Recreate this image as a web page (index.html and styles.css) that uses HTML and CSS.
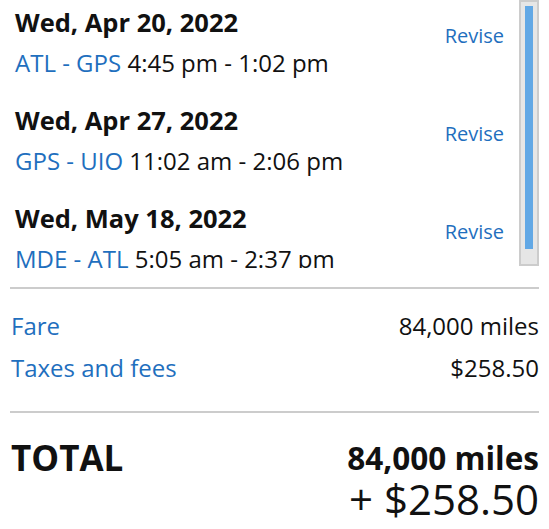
FILE: index.html
```html
<!doctype html>
<html>
<head>
<meta charset="utf-8">
<title>Trip summary</title>
<link rel="stylesheet" href="styles.css">
</head>
<body>
<div class="legsBox">
    <div class="legs">
        <div class="leg">
            <div class="legInfo">
                <div class="legDate">Wed, Apr 20, 2022</div>
                <div class="legRoute"><span class="airports">ATL - GPS</span> 4:45 pm - 1:02 pm</div>
            </div>
            <a class="revise" href="#">Revise</a>
        </div>
        <div class="leg">
            <div class="legInfo">
                <div class="legDate">Wed, Apr 27, 2022</div>
                <div class="legRoute"><span class="airports">GPS - UIO</span> 11:02 am - 2:06 pm</div>
            </div>
            <a class="revise" href="#">Revise</a>
        </div>
        <div class="leg">
            <div class="legInfo">
                <div class="legDate">Wed, May 18, 2022</div>
                <div class="legRoute"><span class="airports">MDE - ATL</span> 5:05 am - 2:37 pm</div>
            </div>
            <a class="revise" href="#">Revise</a>
        </div>
    </div>
    <div class="scrollTrack"><span class="scrollThumb"></span></div>
</div>
<ul class="price">
    <li class="priceRow">
        <span class="priceLabel">Fare</span>
        <span class="priceValue">84,000 miles</span>
    </li>
    <li class="priceRow">
        <span class="priceLabel">Taxes and fees</span>
        <span class="priceValue">$258.50</span>
    </li>
</ul>
<div class="total">
    <span class="totalLabel">TOTAL</span>
    <div class="totalValue">
        <span class="totalMiles">84,000 miles</span>
        <span class="totalCash">+ $258.50</span>
    </div>
</div>
</body>
</html>
```

FILE: styles.css
```css
html,
body {
	margin: 0;
	background: #fff;
}
body {
	padding: 0 10px;
	font-family: "Open Sans", "Noto Sans", sans-serif;
	color: #111;
}
ul {
	margin: 0;
	padding: 0;
	list-style: none;
}
.legsBox {
	display: flex;
	height: 268px;
}
.legs {
	flex: 1;
	overflow: hidden;
}
.scrollTrack {
	box-sizing: border-box;
	display: flex;
	flex-direction: column;
	width: 20px;
	height: 266px;
	padding: 4px 4px 0;
	background: #e6e6e6;
	border: 2px solid #ccc;
}
.scrollThumb {
	height: 243px;
	background: #62a8e5;
}
.leg {
	display: flex;
	align-items: flex-start;
	justify-content: space-between;
	padding: 6px 15px 19px 5px;
}
.legDate {
	font-size: 25.5px;
	font-weight: bold;
	line-height: 32px;
	margin-bottom: 9px;
}
.legRoute {
	font-size: 24px;
	line-height: 32px;
	white-space: nowrap;
}
.airports,
.revise,
.priceLabel {
	color: #1f6fbe;
}
.revise {
	font-size: 20px;
	line-height: 28px;
	text-decoration: none;
	margin-top: 16px;
}
.price {
	margin-top: 19px;
	padding: 16px 0 22px 1px;
	border-top: 2px solid #ccc;
	border-bottom: 2px solid #ccc;
}
.priceRow {
	display: flex;
	justify-content: space-between;
	font-size: 24px;
	line-height: 42px;
}
.total {
	display: flex;
	justify-content: space-between;
	align-items: flex-start;
	padding-top: 24px;
}
.totalLabel {
	font-size: 35px;
	font-weight: bold;
	line-height: 42px;
	padding-left: 1px;
}
.totalValue {
	display: flex;
	flex-direction: column;
	align-items: flex-end;
}
.totalMiles {
	font-size: 31.5px;
	font-weight: bold;
	line-height: 42px;
}
.totalCash {
	font-size: 42px;
	line-height: 40px;
}
```
